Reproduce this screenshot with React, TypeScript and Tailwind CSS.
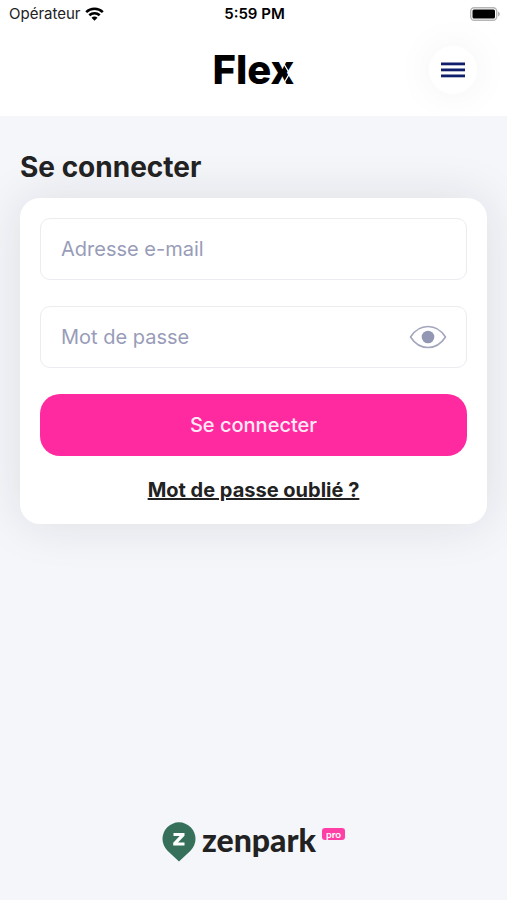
import React, { useState } from 'react';

const StatusBar: React.FC = () => (
  <div className="grid h-7 grid-cols-3 items-center pl-[9px] pr-[7px] text-[15px] text-[#222]">
    <div className="flex items-center gap-1">
      <span>Opérateur</span>
      <svg width="19" height="14" viewBox="0 0 19 14" fill="none" stroke="#000" strokeWidth="2.6" aria-hidden="true">
        <path d="M1.2 5.1C5.8.7 13.200.7 17.800 5.1" />
        <path d="M4.300 8.300C7.300 5.500 11.700 5.500 14.700 8.300" />
        <path d="M9.500 13.700 6.500 10.700C8.200 9.100 10.800 9.100 12.500 10.700Z" fill="#000" stroke="none" />
      </svg>
    </div>
    <span className="text-center font-semibold text-black">5:59 PM</span>
    <svg className="justify-self-end" width="30" height="14" viewBox="0 0 30 14" aria-hidden="true">
      <rect x="0.700" y="0.700" width="26" height="12.600" rx="3.500" fill="#fff" stroke="#b5b5b5" strokeWidth="1.400" />
      <rect x="2.500" y="2.500" width="22.500" height="9" rx="1.500" fill="#000" />
      <path d="M28 4.500c2.400.8 2.400 4.200 0 5Z" fill="#b5b5b5" />
    </svg>
  </div>
);

const FlexLogo: React.FC = () => (
  <div className="relative col-start-2 text-[40px] leading-[48px] font-extrabold text-black">
    Flex
    {/* white cut through the x */}
    <svg className="absolute right-0 bottom-[9px]" width="14" height="24" viewBox="0 0 14 24" fill="none" aria-hidden="true">
      <path d="M4 3 9.500 12.500 4 22" stroke="#fff" strokeWidth="1.300" />
    </svg>
  </div>
);

const Header: React.FC = () => (
  <header className="overflow-hidden bg-white">
    <StatusBar />
    <div className="grid h-[88px] grid-cols-[1fr_auto_1fr] items-center px-[30px] pb-1">
      <FlexLogo />
      <button
        type="button"
        aria-label="Menu"
        className="flex size-12 items-center justify-center justify-self-end rounded-full bg-white shadow-[0_0_40px_rgba(0,0,0,0.06)]"
      >
        <svg width="24" height="16" viewBox="0 0 24 16" fill="#101f6b" aria-hidden="true">
          <rect y="0.500" width="24" height="2.800" />
          <rect y="6.500" width="24" height="2.800" />
          <rect y="12.500" width="24" height="2.800" />
        </svg>
      </button>
    </div>
  </header>
);

const inputClass =
  'h-[62px] w-full rounded-[10px] border border-[#ececf0] bg-white px-5 text-xl text-[#222] outline-none placeholder:text-[#989cb8]';

const LoginForm: React.FC = () => {
  const [visible, setVisible] = useState(false);

  return (
    <form
      onSubmit={(e) => e.preventDefault()}
      className="flex flex-col gap-[26px] rounded-[20px] bg-white p-5 shadow-[0_0_50px_rgba(30,30,40,0.11)]"
    >
      <input type="email" aria-label="Adresse e-mail" placeholder="Adresse e-mail" className={inputClass} />
      <div className="relative">
        <input
          type={visible ? 'text' : 'password'}
          aria-label="Mot de passe"
          placeholder="Mot de passe"
          className={`${inputClass} pr-16`}
        />
        <button
          type="button"
          aria-label="Afficher le mot de passe"
          onClick={() => setVisible(!visible)}
          className="absolute inset-y-0 right-5"
        >
          <svg width="38" height="24" viewBox="0 0 38 24" fill="none" aria-hidden="true">
            <path
              d="M1.500 12C6 5 12 1.500 19 1.500S32 5 36.500 12C32 19 26 22.500 19 22.500S6 19 1.500 12Z"
              stroke="#a3a6bd"
              strokeWidth="1.600"
              strokeLinejoin="round"
            />
            <circle cx="19" cy="12" r="6.300" fill="#9297b4" />
          </svg>
        </button>
      </div>
      <div className="flex flex-col items-center gap-5">
        <button type="submit" className="h-[62px] w-full rounded-[20px] bg-[#ff2a9f] text-xl font-medium text-[#ffe9f6]">
          Se connecter
        </button>
        <a href="#" className="text-xl font-bold text-[#222] underline decoration-2">
          Mot de passe oublié ?
        </a>
      </div>
    </form>
  );
};

const ZenparkLogo: React.FC = () => (
  <div className="flex items-center font-[Lato,sans-serif] font-bold">
    <svg width="34" height="40" viewBox="0 0 34 40" aria-hidden="true">
      <path d="M17 39.500 5.500 28.700A16.500 16.500 0 1 1 28.500 28.700Z" fill="#36705a" />
      <path d="M11.500 11H22.500V13.800L16 20.500H22.500V23.500H11.200V20.700L17.700 14H11.500Z" fill="#fff" />
    </svg>
    <span className="mb-1 ml-1.5 text-[32px] leading-9 font-black text-[#222]">zenpark</span>
    <span className="mb-4 ml-1.5 rounded-[3px] bg-[#ff3fa6] px-1 text-[10px] leading-3 text-white">pro</span>
  </div>
);

export default function App() {
  return (
    <div className="flex min-h-screen flex-col bg-[#f4f6fa] font-[Inter,sans-serif]">
      <Header />
      <main className="flex-1 px-5 pt-[33px]">
        <h1 className="pb-[13px] text-[28px] leading-9 font-bold text-[#222]">Se connecter</h1>
        <LoginForm />
      </main>
      <footer className="flex justify-center pb-[38px]">
        <ZenparkLogo />
      </footer>
    </div>
  );
}
